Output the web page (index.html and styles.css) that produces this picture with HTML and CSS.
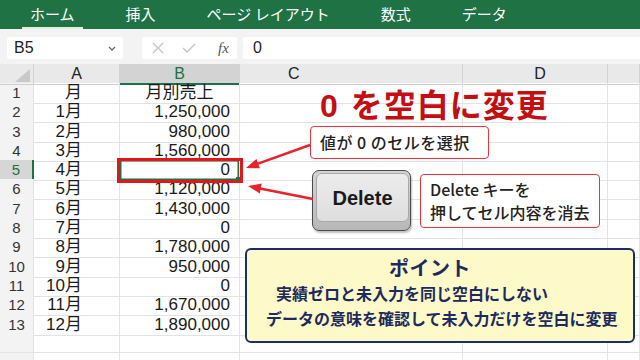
FILE: index.html
```html
<!DOCTYPE html>
<html lang="ja">
<head>
    <meta charset="UTF-8">
    <title>0を空白に変更</title>
    <link rel="stylesheet" href="styles.css">
</head>
<body>
<div class="page">

    <!-- リボン -->
    <div class="ribbon">
        <span class="tab active">ホーム</span>
        <span class="tab">挿入</span>
        <span class="tab">ページ レイアウト</span>
        <span class="tab">数式</span>
        <span class="tab">データ</span>
    </div>

    <!-- 数式バー -->
    <div class="formula-bar">
        <div class="name-box">
            <span>B5</span>
            <svg class="chevron" width="8" height="5" viewBox="0 0 8 5"><path d="M1 1 L4 4 L7 1" fill="none" stroke="#666" stroke-width="1.3"/></svg>
        </div>
        <div class="fx-box">
            <svg width="12" height="12" viewBox="0 0 12 12"><path d="M1 1 L11 11 M11 1 L1 11" stroke="#c4c4c4" stroke-width="1.3"/></svg>
            <svg width="14" height="12" viewBox="0 0 14 12"><path d="M1 6 L5 10 L13 2" fill="none" stroke="#c4c4c4" stroke-width="1.3"/></svg>
            <span class="fx">fx</span>
        </div>
        <div class="input-box">0</div>
    </div>

    <!-- シート -->
    <div class="sheet">
        <div class="row head">
            <div class="corner"><span class="tri"></span></div>
            <div class="col">A</div>
            <div class="col sel">B</div>
            <div class="col col-c">C</div>
            <div class="col col-d">D</div>
            <div class="col"></div>
        </div>
        <div class="row"><div class="num">1</div><div class="a">月</div><div class="b title">月別売上</div><div></div><div></div><div></div></div>
        <div class="row"><div class="num">2</div><div class="a">1月</div><div class="b">1,250,000</div><div></div><div></div><div></div></div>
        <div class="row"><div class="num">3</div><div class="a">2月</div><div class="b">980,000</div><div></div><div></div><div></div></div>
        <div class="row"><div class="num">4</div><div class="a">3月</div><div class="b">1,560,000</div><div></div><div></div><div></div></div>
        <div class="row"><div class="num active">5</div><div class="a">4月</div><div class="b current">0<span class="mark"></span><span class="handle"></span></div><div></div><div></div><div></div></div>
        <div class="row"><div class="num">6</div><div class="a">5月</div><div class="b">1,120,000</div><div></div><div></div><div></div></div>
        <div class="row"><div class="num">7</div><div class="a">6月</div><div class="b">1,430,000</div><div></div><div></div><div></div></div>
        <div class="row"><div class="num">8</div><div class="a">7月</div><div class="b">0</div><div></div><div></div><div></div></div>
        <div class="row"><div class="num">9</div><div class="a">8月</div><div class="b">1,780,000</div><div></div><div></div><div></div></div>
        <div class="row"><div class="num">10</div><div class="a">9月</div><div class="b">950,000</div><div></div><div></div><div></div></div>
        <div class="row"><div class="num">11</div><div class="a">10月</div><div class="b">0</div><div></div><div></div><div></div></div>
        <div class="row"><div class="num">12</div><div class="a">11月</div><div class="b">1,670,000</div><div></div><div></div><div></div></div>
        <div class="row"><div class="num">13</div><div class="a">12月</div><div class="b">1,890,000</div><div></div><div></div><div></div></div>
        <div class="row"><div class="num"></div><div class="a"></div><div class="b"></div><div></div><div></div><div></div></div>
        <div class="row"><div class="num"></div><div class="a"></div><div class="b"></div><div></div><div></div><div></div></div>
    </div>

    <!-- 説明 -->
    <div class="headline"><span class="zero">0</span>を空白に変更</div>

    <div class="callout callout-select">値が 0 のセルを選択</div>

    <div class="key"><div class="key-face">Delete</div></div>

    <div class="callout callout-delete">Delete キーを<br>押してセル内容を消去</div>

    <svg class="arrows" width="640" height="360" viewBox="0 0 640 360">
        <line x1="310" y1="145" x2="258" y2="163.6" stroke="#e8232a" stroke-width="2.5"/>
        <polygon points="246,168 259.9,168.3 256.5,158.9" fill="#e8232a"/>
        <line x1="313" y1="199" x2="260" y2="188.5" stroke="#e8232a" stroke-width="2.5"/>
        <polygon points="248,186 259.8,193.4 261.7,183.6" fill="#e8232a"/>
    </svg>

    <div class="point">
        <div class="point-title">ポイント</div>
        <div class="point-line first">実績ゼロと未入力を同じ空白にしない</div>
        <div class="point-line second">データの意味を確認して未入力だけを空白に変更</div>
    </div>

</div>
</body>
</html>
```

FILE: styles.css
```css
body {
    margin: 0;
    padding: 0;
    font-family: 'Liberation Sans', 'Noto Sans CJK JP', sans-serif;
    background-color: white;
    overflow: hidden;
}

.page {
    position: relative;
    width: 640px;
    height: 360px;
    overflow: hidden;
}

/* リボン */
.ribbon {
    display: flex;
    gap: 35px;
    height: 29px;
    padding-left: 22px;
    background-color: #1f7244;
    box-sizing: border-box;
}

.tab {
    height: 29px;
    line-height: 28px;
    padding: 0 8px;
    color: white;
    font-family: 'Noto Sans CJK JP', sans-serif;
    font-size: 15px;
    box-sizing: border-box;
    white-space: nowrap;
}

.tab.active {
    border-bottom: 2px solid #dff1d2;
}

/* 数式バー */
.formula-bar {
    display: flex;
    height: 35px;
    padding: 8px 0 0 7px;
    background-color: #f3f3f3;
    box-sizing: border-box;
}

.name-box {
    display: flex;
    align-items: center;
    justify-content: space-between;
    width: 116px;
    height: 22px;
    padding: 0 7px;
    margin-right: 19px;
    background-color: white;
    border-radius: 3px;
    font-size: 16px;
    color: #222;
    box-sizing: border-box;
}

.chevron {
    margin-top: 1px;
}

.fx-box {
    display: flex;
    align-items: center;
    width: 95px;
    height: 22px;
    padding: 0 8px 0 10px;
    gap: 18px;
    margin-right: 6px;
    background-color: white;
    border-radius: 3px;
    box-sizing: border-box;
}

.fx {
    margin-left: 4px;
    font-family: 'Liberation Serif', serif;
    font-style: italic;
    font-size: 15px;
    color: #555;
}

.input-box {
    flex: 1;
    height: 22px;
    line-height: 22px;
    padding-left: 10px;
    background-color: white;
    border-radius: 3px 0 0 3px;
    font-size: 16px;
    color: #222;
}

/* シート */
.sheet {
    font-size: 17px;
    color: #1a1a1a;
}

.row {
    display: grid;
    grid-template-columns: 34px 86px 120px 223px 145px 1fr;
    height: 19.3px;
}

.row > div {
    border-right: 1px solid #e3e3e3;
    border-bottom: 1px solid #e3e3e3;
    box-sizing: border-box;
    line-height: 20px;
    white-space: nowrap;
}

.row.head {
    height: 19px;
    background-color: #e9e9e9;
}

.row.head > div {
    border-right: 1px solid #d2d2d2;
    border-bottom: 1px solid #cfcfcf;
    text-align: center;
    font-size: 16px;
    line-height: 19px;
    color: #222;
}

.corner {
    position: relative;
}

.tri {
    position: absolute;
    right: 3px;
    bottom: 2px;
    width: 0;
    height: 0;
    border-left: 15px solid transparent;
    border-bottom: 13px solid #c9c9c9;
}

.row.head .col.sel {
    background-color: #d3d3d3;
    color: #1e7145;
    border-bottom: 2px solid #1e7145;
}

.row.head .col-c {
    text-align: left;
    padding-left: 48px;
}

.row.head .col-d {
    padding-left: 10px;
}

.num {
    background-color: #f3f3f3;
    text-align: center;
    font-size: 15px;
    color: #333;
}

.num.active {
    background-color: #d6d6d6;
    color: #1e7145;
    border-right: 2px solid #1e7145 !important;
}

.a {
    text-align: right;
    padding-right: 37px;
}

.b {
    text-align: right;
    padding-right: 9px;
}

.b.title {
    text-align: center;
    padding-right: 0;
}

.b.current {
    position: relative;
    box-shadow: inset 0 0 0 1.5px #1e7145;
}

.mark {
    position: absolute;
    left: -3px;
    top: -2px;
    right: -4px;
    bottom: -3px;
    border: 3px solid #e8141a;
}

.handle {
    position: absolute;
    right: -1px;
    bottom: -1px;
    width: 4px;
    height: 4px;
    background-color: #1e7145;
}

/* 説明 */
.headline {
    position: absolute;
    left: 320px;
    top: 85px;
    font-family: 'Noto Sans CJK JP', sans-serif;
    font-size: 32px;
    font-weight: bold;
    line-height: 36px;
    letter-spacing: 1px;
    color: #c40e12;
}

.headline .zero {
    font-family: 'Liberation Sans', sans-serif;
    margin-right: 12px;
}

.callout {
    position: absolute;
    background-color: white;
    border: 1.5px solid #e8343a;
    border-radius: 4px;
    box-sizing: border-box;
    font-family: 'Noto Sans CJK JP', sans-serif;
    font-size: 16px;
    font-weight: 500;
    color: #222;
}

.callout-select {
    left: 310px;
    top: 126px;
    width: 179px;
    height: 33px;
    padding-left: 9px;
    line-height: 30px;
    letter-spacing: 0.5px;
}

.callout-delete {
    left: 420px;
    top: 174px;
    width: 180px;
    height: 54px;
    padding: 3px 9px;
    line-height: 23px;
}

.key {
    position: absolute;
    left: 312px;
    top: 170px;
    width: 99px;
    height: 61px;
    border: 1.5px solid #4a4a4a;
    border-radius: 7px;
    background: linear-gradient(#d4d4d4, #b8b8b8);
    box-shadow: 1px 2px 2px rgba(0, 0, 0, 0.25);
    box-sizing: border-box;
}

.key-face {
    position: absolute;
    left: 3px;
    top: 2px;
    right: 1px;
    bottom: 8px;
    border: 1px solid #a8a8a8;
    border-radius: 6px;
    background: linear-gradient(#ececec, #dedede);
    text-align: center;
    line-height: 48px;
    font-size: 20px;
    font-weight: bold;
    color: #1a1a1a;
}

.arrows {
    position: absolute;
    left: 0;
    top: 0;
    pointer-events: none;
}

.point {
    position: absolute;
    left: 245px;
    top: 248px;
    width: 390px;
    height: 95px;
    padding-top: 5px;
    background-color: #fdf9c9;
    border: 2.5px solid #1b2d6b;
    border-radius: 6px;
    box-sizing: border-box;
    font-family: 'Noto Sans CJK JP', sans-serif;
    font-weight: bold;
    color: #1c2a5c;
}

.point-title {
    margin-left: 142px;
    font-size: 20px;
    line-height: 26px;
    letter-spacing: 0.5px;
}

.point-line {
    font-size: 16px;
    line-height: 25px;
    white-space: nowrap;
}

.point-line.first {
    margin-left: 29px;
}

.point-line.second {
    margin-left: 19px;
}
```
